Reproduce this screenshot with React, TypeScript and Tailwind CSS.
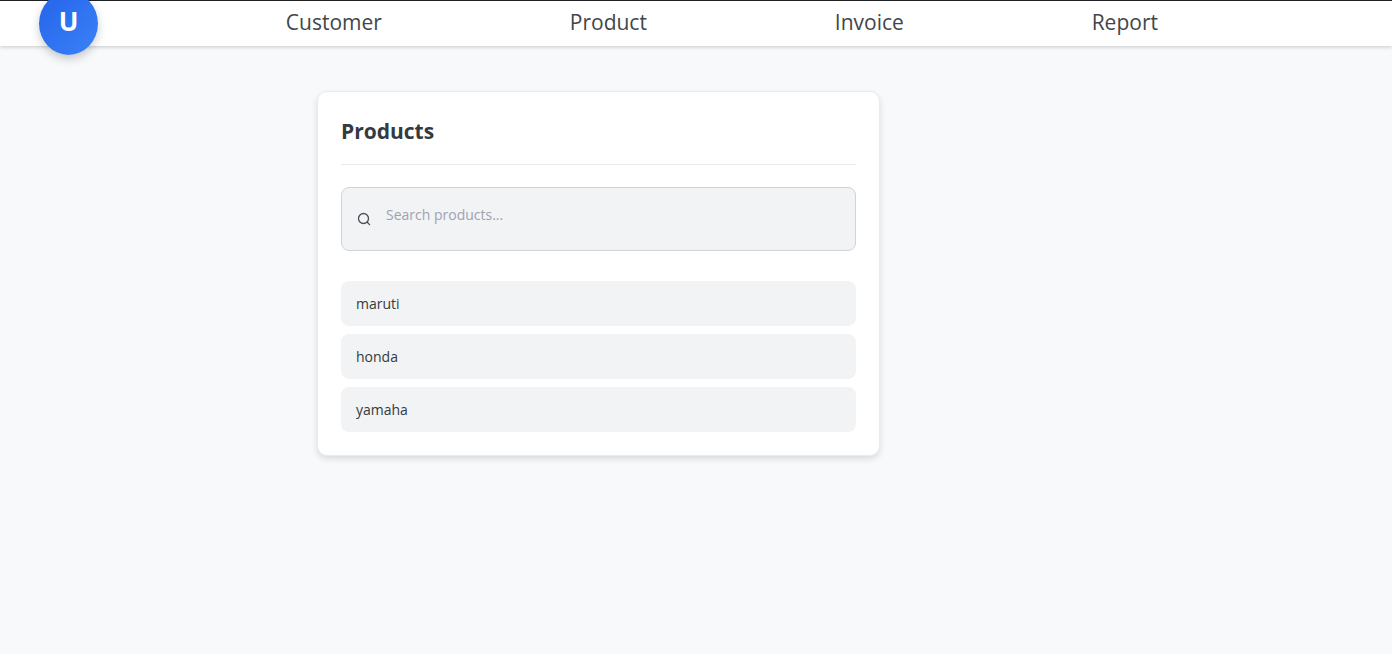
import { useState } from "react";

const links = ["Customer", "Product", "Invoice", "Report"];
const products = ["maruti", "honda", "yamaha"];

function Header() {
  return (
    <header className="relative border-t border-[#202124] bg-white shadow-[0_1px_4px_rgba(0,0,0,0.2)]">
      <nav className="flex h-[45px] items-center justify-between pr-[234px] pl-[39px]">
        <button
          type="button"
          className="-my-3 flex h-[63px] w-[59px] shrink-0 items-center justify-center rounded-[50%] bg-linear-to-br from-[#2563eb] to-[#3b82f6] pb-1 text-[26px] font-bold text-white shadow-[0_4px_10px_rgba(0,0,0,0.2)]"
        >
          U
        </button>
        {links.map((label) => (
          <a key={label} href="#" className="pb-1 text-[21px] leading-8 text-[#41464b]">
            {label}
          </a>
        ))}
      </nav>
    </header>
  );
}

function SearchIcon() {
  return (
    <svg
      className="size-[14px] shrink-0 text-[#495057]"
      viewBox="0 0 14 14"
      fill="none"
      stroke="currentColor"
      strokeWidth="1.3"
      strokeLinecap="round"
      aria-hidden="true"
    >
      <circle cx="6.5" cy="6.5" r="5" />
      <path d="M10.2 10.2 12.6 12.6" />
    </svg>
  );
}

export default function App() {
  const [query, setQuery] = useState("");
  const shown = products.filter((name) => name.includes(query.toLowerCase()));

  return (
    <div className="min-h-screen bg-[#f8f9fb] font-['Segoe_UI','Open_Sans',sans-serif]">
      <Header />
      <main className="px-4 pt-[45px] md:pl-[317px]">
        <section className="w-full max-w-[563px] rounded-[10px] border border-[#e9ecef] bg-white px-[23px] pt-[22px] pb-[23px] shadow-[0_3px_6px_rgba(0,0,0,0.12)]">
          <h1 className="border-b border-[#e9ecef] pb-4 text-[21px] leading-[34px] font-bold text-[#343a40]">
            Products
          </h1>
          <label className="mt-[22px] flex h-16 items-center gap-[15px] rounded-lg border border-[#ced4da] bg-[#f1f3f5] px-[15px]">
            <SearchIcon />
            <input
              type="text"
              aria-label="Search products"
              placeholder="Search products..."
              value={query}
              onChange={(event) => setQuery(event.target.value)}
              className="h-8 min-w-0 flex-1 bg-transparent pb-2.5 text-[14px] text-[#343a40] outline-none placeholder:text-[#9ca3af]"
            />
          </label>
          <ul className="mt-[30px] flex flex-col gap-2">
            {shown.map((name) => (
              <li
                key={name}
                className="flex h-[45px] items-center rounded-lg bg-[#f1f3f5] px-[15px] text-[14px] text-[#343a40]"
              >
                {name}
              </li>
            ))}
          </ul>
        </section>
      </main>
    </div>
  );
}
